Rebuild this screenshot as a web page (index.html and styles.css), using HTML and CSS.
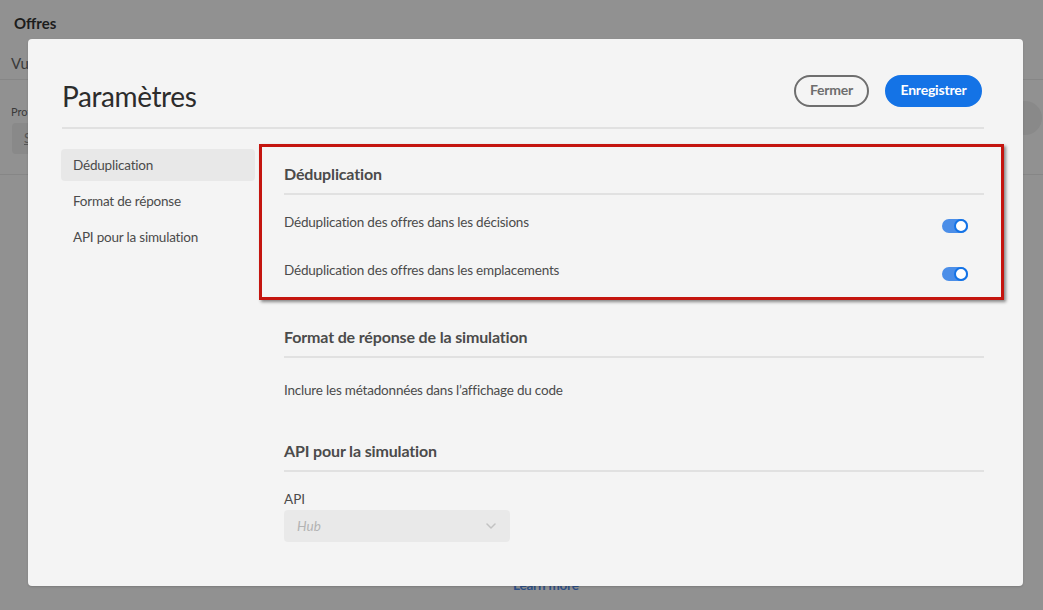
FILE: index.html
```html
<!DOCTYPE html>
<html lang="fr">
<head>
    <meta charset="UTF-8">
    <meta name="viewport" content="width=device-width, initial-scale=1.0">
    <title>Offres - Paramètres</title>
    <link rel="stylesheet" href="styles.css">
</head>
<body>
    <!-- page behind the dialog -->
    <div class="page">
        <div class="page-title">Offres</div>
        <div class="page-tabs">
            <span>Vue d'ensemble</span>
        </div>
        <div class="page-filters">
            <div class="filter">
                <div class="filter-label">Profil</div>
                <div class="filter-box"><u>S</u></div>
            </div>
        </div>
        <div class="page-avatar"></div>
        <div class="page-learn">Learn more</div>
    </div>

    <div class="modal">
        <div class="modal-header">
            <h1>Paramètres</h1>
            <div class="actions">
                <button class="btn btn-secondary">Fermer</button>
                <button class="btn btn-primary">Enregistrer</button>
            </div>
        </div>

        <div class="modal-body">
            <nav class="side-nav">
                <a class="nav-item selected">Déduplication</a>
                <a class="nav-item">Format de réponse</a>
                <a class="nav-item">API pour la simulation</a>
            </nav>

            <div class="content">
                <div class="highlight">
                    <section class="section first">
                        <h2>Déduplication</h2>
                        <div class="row">
                            <span>Déduplication des offres dans les décisions</span>
                            <span class="toggle"></span>
                        </div>
                        <div class="row">
                            <span>Déduplication des offres dans les emplacements</span>
                            <span class="toggle"></span>
                        </div>
                    </section>
                </div>

                <section class="section">
                    <h2>Format de réponse de la simulation</h2>
                    <div class="row">
                        <span>Inclure les métadonnées dans l’affichage du code</span>
                    </div>
                </section>

                <section class="section">
                    <h2>API pour la simulation</h2>
                    <label class="field-label">API</label>
                    <div class="select">
                        <span>Hub</span>
                        <svg width="10" height="6" viewBox="0 0 10 6"><path d="M1 1l4 4 4-4" fill="none" stroke="#c2c2c2" stroke-width="1.5" stroke-linecap="round" stroke-linejoin="round"/></svg>
                    </div>
                </section>
            </div>
        </div>
    </div>
</body>
</html>
```

FILE: styles.css
```css
body {
    margin: 0;
    padding: 0;
    width: 1043px;
    height: 610px;
    overflow: hidden;
    background-color: #919191;
    font-family: 'Lato', 'Open Sans', sans-serif;
    color: #4b4b4b;
    position: relative;
}
.page {
    height: 610px;
}
.page-title {
    padding: 14px 0 0 14px;
    font-size: 15px;
    font-weight: bold;
    color: #1c1c1c;
    line-height: 18px;
}
.page-tabs {
    margin-top: 22px;
    padding: 0 0 7px 11px;
    border-bottom: 1px solid #868686;
    font-size: 15px;
    color: #3a3a3a;
    line-height: 18px;
}
.page-filters {
    padding: 26px 0 20px 11px;
    border-bottom: 1px solid #868686;
}
.filter-label {
    font-size: 11px;
    color: #3a3a3a;
    line-height: 12px;
}
.filter-box {
    margin: 5px 0 0 1px;
    width: 200px;
    height: 31px;
    border-radius: 4px;
    background-color: #898989;
    font-size: 13px;
    color: #555;
    line-height: 31px;
    padding-left: 12px;
    box-sizing: border-box;
}
.page-avatar {
    position: absolute;
    left: 1008px;
    top: 101px;
    width: 34px;
    height: 34px;
    border-radius: 50%;
    background-color: #898989;
}
.page-learn {
    position: absolute;
    left: 513px;
    top: 577px;
    font-size: 13.5px;
    font-weight: bold;
    letter-spacing: -0.2px;
    color: #2d4f86;
}

/* dialog */
.modal {
    position: absolute;
    left: 28px;
    top: 39px;
    width: 995px;
    height: 547px;
    box-sizing: border-box;
    padding: 36px 39px 0 34px;
    background-color: #f4f4f4;
    border-radius: 4px;
    box-shadow: 0 1px 2px rgba(0, 0, 0, 0.15);
}
.modal-header {
    display: flex;
    justify-content: space-between;
    align-items: flex-start;
    padding-bottom: 14px;
    border-bottom: 2px solid #e1e1e1;
}
.modal-header h1 {
    margin: 4px 0 0 0;
    font-size: 28px;
    line-height: 34px;
    font-weight: normal;
    letter-spacing: -0.4px;
    color: #2c2c2c;
}
.actions {
    display: flex;
    gap: 16px;
    margin-right: 2px;
}
.btn {
    height: 32px;
    border-radius: 16px;
    font-family: inherit;
    font-size: 14px;
    font-weight: bold;
    letter-spacing: -0.2px;
    padding: 0 0 3px 0;
    box-sizing: border-box;
    cursor: pointer;
}
.btn-secondary {
    width: 75px;
    background: transparent;
    border: 2px solid #6e6e6e;
    color: #6e6e6e;
}
.btn-primary {
    width: 97px;
    background-color: #1473e6;
    border: 2px solid #1473e6;
    color: white;
}
.modal-body {
    display: flex;
    margin-top: 15px;
}
.side-nav {
    width: 194px;
    margin-left: -1px;
    padding-top: 5px;
    display: flex;
    flex-direction: column;
    gap: 4px;
}
.nav-item {
    display: block;
    height: 32px;
    line-height: 32px;
    padding-left: 12px;
    border-radius: 4px;
    font-size: 13.5px;
    letter-spacing: -0.2px;
    color: #4b4b4b;
}
.nav-item.selected {
    background-color: #e8e8e8;
}
.content {
    flex: 1;
    margin-left: 29px;
}
.highlight {
    margin: 0 -20px 0 -25px;
    padding: 0 17px 2px 22px;
    border: 3px solid #c4150f;
    box-shadow: 2px 2px 3px rgba(0, 0, 0, 0.45);
}
.section {
    margin-top: 10px;
}
.section.first {
    margin-top: 0;
}
.section h2 {
    margin: 0;
    padding: 17px 0 9px 0;
    font-size: 16px;
    line-height: 20px;
    font-weight: bold;
    letter-spacing: -0.15px;
    color: #4b4b4b;
    border-bottom: 2px solid #e1e1e1;
}
.row {
    display: flex;
    justify-content: space-between;
    align-items: center;
    height: 48px;
    font-size: 13.5px;
    letter-spacing: -0.2px;
    color: #4b4b4b;
}
.section h2 + .row {
    margin-top: 8px;
}
.section.first h2 + .row {
    margin-top: 3px;
}
.section.first .row + .row {
    margin-bottom: 1px;
}
.toggle {
    position: relative;
    width: 26px;
    height: 14px;
    margin: 8px 16px 0 0;
    border-radius: 7px;
    background-color: #4b8ee8;
}
.toggle::after {
    content: "";
    position: absolute;
    right: 0;
    top: 0;
    width: 14px;
    height: 14px;
    box-sizing: border-box;
    border-radius: 50%;
    border: 2px solid #1473e6;
    background-color: white;
}
.field-label {
    display: block;
    margin-top: 18px;
    font-size: 13.5px;
    line-height: 18px;
    color: #4b4b4b;
}
.select {
    display: flex;
    justify-content: space-between;
    align-items: center;
    width: 226px;
    height: 32px;
    margin-top: 2px;
    padding: 0 14px 0 13px;
    box-sizing: border-box;
    border-radius: 4px;
    background-color: #e9e9e9;
    font-size: 13.5px;
    font-style: italic;
    color: #b3b3b3;
}
```
